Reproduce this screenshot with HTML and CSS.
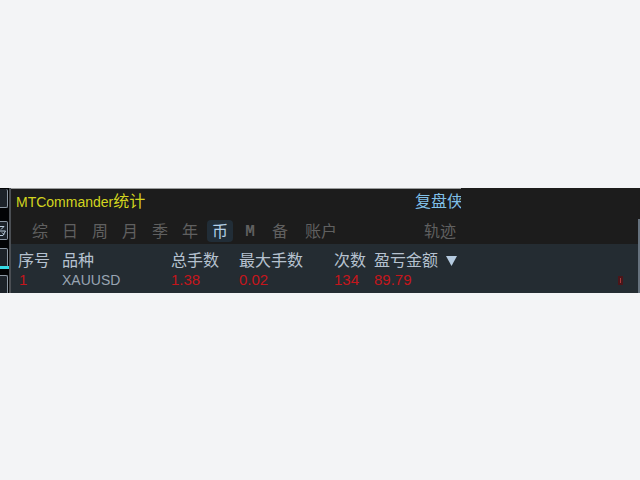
FILE: index.html
```
<!DOCTYPE html>
<html lang="zh-CN">
<head>
    <meta charset="UTF-8">
    <meta name="viewport" content="width=device-width, initial-scale=1.0">
    <link rel="stylesheet" href="styles.css">
    <title>MTCommander统计</title>
</head>
<body>

<div class="panel">

    <!--Edge of the chart toolbar-->
    <div class="toolbar">
        <div class="tool"></div>
        <div class="tool">
            <svg viewBox="0 0 7 17"><path d="M0 4.5h4L1 7.500M0 9h5.500L3 13.500H0M2 10.500l2 2"/></svg>
        </div>
        <div class="tool"></div>
        <div class="tool"></div>
        <div class="price-line"></div>
    </div>

    <div class="content">
        <div class="header">
            <div class="header-left">
                <div class="title-row">
                    <h1>MTCommander<span>统计</span></h1>
                    <a class="replay" href="#">复盘侠</a>
                </div>
                <div class="tabs">
                    <button>综</button>
                    <button>日</button>
                    <button>周</button>
                    <button>月</button>
                    <button>季</button>
                    <button>年</button>
                    <button class="active">币</button>
                    <button class="small">M</button>
                    <button>备</button>
                    <button class="wide">账户</button>
                    <button class="wide track">轨迹</button>
                </div>
            </div>
        </div>

        <table>
            <colgroup>
                <col class="col-index">
                <col class="col-symbol">
                <col class="col-lots">
                <col class="col-max">
                <col class="col-count">
                <col>
                <col class="col-end">
            </colgroup>
            <thead>
                <tr>
                    <th>序号</th>
                    <th>品种</th>
                    <th>总手数</th>
                    <th>最大手数</th>
                    <th>次数</th>
                    <th>盈亏金额<svg class="sort" viewBox="0 0 11 11"><path d="M0 1h11L5.500 11z"/></svg></th>
                    <th></th>
                </tr>
            </thead>
            <tbody>
                <tr>
                    <td>1</td>
                    <td class="symbol">XAUUSD</td>
                    <td>1.38</td>
                    <td>0.02</td>
                    <td>134</td>
                    <td>89.79</td>
                    <td><svg class="mark" viewBox="0 0 5 9"><path class="mark-box" d="M0 0h5v9H0z"/><path class="mark-line" d="M2 2h1v5H2z"/></svg></td>
                </tr>
            </tbody>
        </table>
    </div>

    <div class="edge"></div>
</div>

</body>
</html>
```
FILE: styles.css
```
body{
    margin: 0;
    min-height: 100vh;
    display: flex;
    align-items: center;
    background-color: #f3f4f6;
    font-family: "Liberation Sans", "Noto Sans CJK SC", sans-serif;
    font-size: 14px;
}
.panel{
    display: flex;
    width: 100%;
    margin-top: 1px;
    background-color: #1c1c1c;
}
.toolbar{
    position: relative;
    box-sizing: border-box;
    flex: 0 0 11px;
    display: grid;
    grid-template-rows: 32px 27px 27px 18px;
    padding-top: 1px;
    overflow: hidden;
    background-color: #020305;
    border-right: 2px solid #4b4f54;
}
.tool{
    box-sizing: border-box;
    width: 8px;
    height: 19px;
    overflow: hidden;
    background-color: #1c2229;
    border: 1px solid #8d98a4;
    border-left: 0;
    border-radius: 0 2px 2px 0;
}
.tool:first-child{
    border-top: 0;
}
.tool:nth-child(4){
    border-bottom: 0;
}
.tool svg{
    display: block;
    width: 7px;
    height: 17px;
    fill: none;
    stroke: #b9cbdc;
}
.price-line{
    position: absolute;
    left: 0;
    right: 0;
    top: 78px;
    height: 3px;
    background-color: #35dbe6;
}
.content{
    flex: 1;
    min-width: 0;
}
.header-left{
    box-sizing: border-box;
    max-width: 450px;
    overflow: hidden;
    border-top: 1px solid #999b9c;
}
.title-row{
    display: flex;
    justify-content: space-between;
    height: 28px;
    padding-left: 5px;
    line-height: 26px;
    white-space: nowrap;
}
h1{
    margin: 0;
    color: #d3d51f;
    font-size: 14px;
    font-weight: normal;
}
h1 span{
    font-size: 16px;
}
.replay{
    flex: 0 0 46px;
    overflow: hidden;
    color: #80bfe6;
    font-size: 16px;
    text-decoration: none;
}
.tabs{
    display: flex;
    align-items: center;
    height: 27px;
    padding: 0 3px 0 14px;
}
.tabs button{
    width: 30px;
    height: 22px;
    padding: 0;
    border: 0;
    border-radius: 4px;
    background: none;
    color: #606060;
    font-family: inherit;
    font-size: 16px;
    line-height: 24px;
}
.tabs .active{
    width: 26px;
    margin: 0 2px;
    background-color: #212d37;
    color: #b3cfe6;
}
.tabs .small{
    font-family: "Liberation Mono", monospace;
    font-weight: bold;
}
.tabs .wide{
    width: 36px;
    margin-left: 8px;
}
.tabs .track{
    margin-left: auto;
}
table{
    width: 100%;
    table-layout: fixed;
    border-collapse: collapse;
    background-color: #242c32;
}
.col-index{
    width: 51px;
}
.col-symbol{
    width: 109px;
}
.col-lots{
    width: 68px;
}
.col-max{
    width: 95px;
}
.col-count{
    width: 40px;
}
.col-end{
    width: 20px;
}
th, td{
    padding: 0;
    text-align: left;
    white-space: nowrap;
}
th{
    padding-top: 7px;
    color: #b6c2d0;
    font-size: 16px;
    font-weight: normal;
    line-height: 20px;
}
td{
    padding-bottom: 4px;
    color: #c5161c;
    font-size: 15px;
    line-height: 18px;
}
th:first-child{
    padding-left: 7px;
}
td:first-child{
    padding-left: 8px;
}
.symbol{
    color: #99a5b2;
    font-size: 14px;
}
.sort{
    width: 11px;
    height: 11px;
    margin-left: 8px;
    fill: #b5cbe0;
}
.mark{
    display: block;
    width: 5px;
    height: 9px;
}
.mark-box{
    fill: #4b1519;
}
.mark-line{
    fill: #a83a3c;
}
.edge{
    flex: 0 0 2px;
    margin-top: 31px;
    background-color: #66727e;
}
```
